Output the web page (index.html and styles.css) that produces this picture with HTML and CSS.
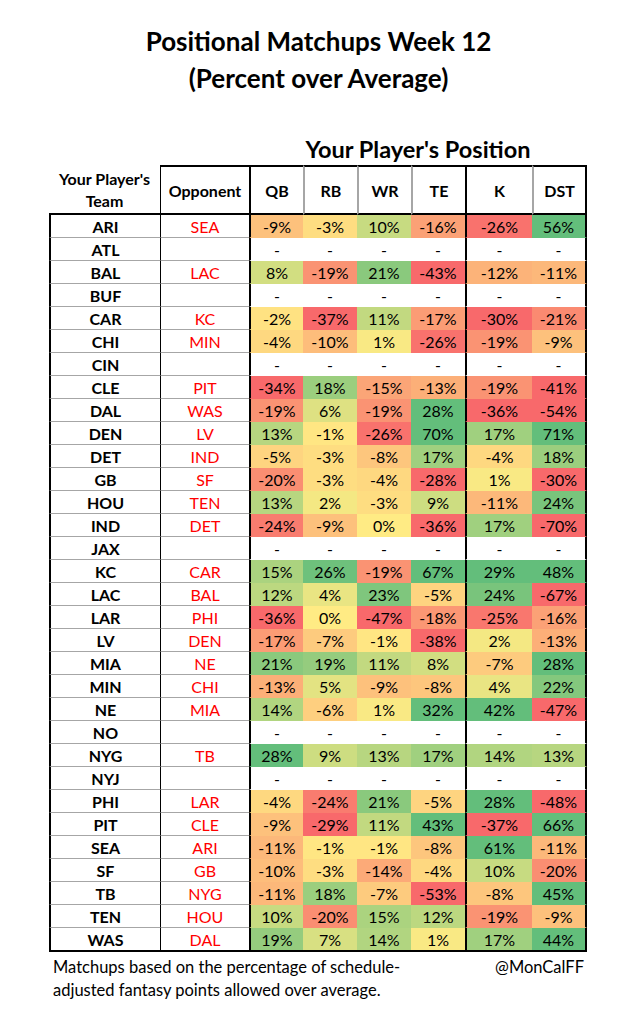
FILE: index.html
```html
<!DOCTYPE html>
<html lang="en">
<head>
<meta charset="utf-8">
<title>Positional Matchups Week 12</title>
<link rel="stylesheet" href="styles.css">
</head>
<body>
<h1 class="title">Positional Matchups Week 12<br>(Percent over Average)</h1>
<main class="sheet">
  <div class="caption">Your Player's Position</div>
  <table class="matchups">
    <colgroup>
      <col class="c-team"><col class="c-opp"><col class="c-pos"><col class="c-pos"><col class="c-pos"><col class="c-pos"><col class="c-k"><col class="c-dst">
    </colgroup>
    <thead>
      <tr>
        <th class="h-team">Your Player's<br>Team</th>
        <th class="h-opp">Opponent</th>
        <th class="h-pos h-qb">QB</th>
        <th class="h-pos">RB</th>
        <th class="h-pos">WR</th>
        <th class="h-pos">TE</th>
        <th class="h-pos h-k">K</th>
        <th class="h-pos h-dst">DST</th>
      </tr>
    </thead>
    <tbody>
      <tr><th>ARI</th><td class="opp">SEA</td><td>-9%</td><td>-3%</td><td>10%</td><td>-16%</td><td>-26%</td><td>56%</td></tr>
      <tr><th>ATL</th><td class="opp"></td><td>-</td><td>-</td><td>-</td><td>-</td><td>-</td><td>-</td></tr>
      <tr><th>BAL</th><td class="opp">LAC</td><td>8%</td><td>-19%</td><td>21%</td><td>-43%</td><td>-12%</td><td>-11%</td></tr>
      <tr><th>BUF</th><td class="opp"></td><td>-</td><td>-</td><td>-</td><td>-</td><td>-</td><td>-</td></tr>
      <tr><th>CAR</th><td class="opp">KC</td><td>-2%</td><td>-37%</td><td>11%</td><td>-17%</td><td>-30%</td><td>-21%</td></tr>
      <tr><th>CHI</th><td class="opp">MIN</td><td>-4%</td><td>-10%</td><td>1%</td><td>-26%</td><td>-19%</td><td>-9%</td></tr>
      <tr><th>CIN</th><td class="opp"></td><td>-</td><td>-</td><td>-</td><td>-</td><td>-</td><td>-</td></tr>
      <tr><th>CLE</th><td class="opp">PIT</td><td>-34%</td><td>18%</td><td>-15%</td><td>-13%</td><td>-19%</td><td>-41%</td></tr>
      <tr><th>DAL</th><td class="opp">WAS</td><td>-19%</td><td>6%</td><td>-19%</td><td>28%</td><td>-36%</td><td>-54%</td></tr>
      <tr><th>DEN</th><td class="opp">LV</td><td>13%</td><td>-1%</td><td>-26%</td><td>70%</td><td>17%</td><td>71%</td></tr>
      <tr><th>DET</th><td class="opp">IND</td><td>-5%</td><td>-3%</td><td>-8%</td><td>17%</td><td>-4%</td><td>18%</td></tr>
      <tr><th>GB</th><td class="opp">SF</td><td>-20%</td><td>-3%</td><td>-4%</td><td>-28%</td><td>1%</td><td>-30%</td></tr>
      <tr><th>HOU</th><td class="opp">TEN</td><td>13%</td><td>2%</td><td>-3%</td><td>9%</td><td>-11%</td><td>24%</td></tr>
      <tr><th>IND</th><td class="opp">DET</td><td>-24%</td><td>-9%</td><td>0%</td><td>-36%</td><td>17%</td><td>-70%</td></tr>
      <tr><th>JAX</th><td class="opp"></td><td>-</td><td>-</td><td>-</td><td>-</td><td>-</td><td>-</td></tr>
      <tr><th>KC</th><td class="opp">CAR</td><td>15%</td><td>26%</td><td>-19%</td><td>67%</td><td>29%</td><td>48%</td></tr>
      <tr><th>LAC</th><td class="opp">BAL</td><td>12%</td><td>4%</td><td>23%</td><td>-5%</td><td>24%</td><td>-67%</td></tr>
      <tr><th>LAR</th><td class="opp">PHI</td><td>-36%</td><td>0%</td><td>-47%</td><td>-18%</td><td>-25%</td><td>-16%</td></tr>
      <tr><th>LV</th><td class="opp">DEN</td><td>-17%</td><td>-7%</td><td>-1%</td><td>-38%</td><td>2%</td><td>-13%</td></tr>
      <tr><th>MIA</th><td class="opp">NE</td><td>21%</td><td>19%</td><td>11%</td><td>8%</td><td>-7%</td><td>28%</td></tr>
      <tr><th>MIN</th><td class="opp">CHI</td><td>-13%</td><td>5%</td><td>-9%</td><td>-8%</td><td>4%</td><td>22%</td></tr>
      <tr><th>NE</th><td class="opp">MIA</td><td>14%</td><td>-6%</td><td>1%</td><td>32%</td><td>42%</td><td>-47%</td></tr>
      <tr><th>NO</th><td class="opp"></td><td>-</td><td>-</td><td>-</td><td>-</td><td>-</td><td>-</td></tr>
      <tr><th>NYG</th><td class="opp">TB</td><td>28%</td><td>9%</td><td>13%</td><td>17%</td><td>14%</td><td>13%</td></tr>
      <tr><th>NYJ</th><td class="opp"></td><td>-</td><td>-</td><td>-</td><td>-</td><td>-</td><td>-</td></tr>
      <tr><th>PHI</th><td class="opp">LAR</td><td>-4%</td><td>-24%</td><td>21%</td><td>-5%</td><td>28%</td><td>-48%</td></tr>
      <tr><th>PIT</th><td class="opp">CLE</td><td>-9%</td><td>-29%</td><td>11%</td><td>43%</td><td>-37%</td><td>66%</td></tr>
      <tr><th>SEA</th><td class="opp">ARI</td><td>-11%</td><td>-1%</td><td>-1%</td><td>-8%</td><td>61%</td><td>-11%</td></tr>
      <tr><th>SF</th><td class="opp">GB</td><td>-10%</td><td>-3%</td><td>-14%</td><td>-4%</td><td>10%</td><td>-20%</td></tr>
      <tr><th>TB</th><td class="opp">NYG</td><td>-11%</td><td>18%</td><td>-7%</td><td>-53%</td><td>-8%</td><td>45%</td></tr>
      <tr><th>TEN</th><td class="opp">HOU</td><td>10%</td><td>-20%</td><td>15%</td><td>12%</td><td>-19%</td><td>-9%</td></tr>
      <tr><th>WAS</th><td class="opp">DAL</td><td>19%</td><td>7%</td><td>14%</td><td>1%</td><td>17%</td><td>44%</td></tr>
    </tbody>
  </table>
  <footer class="note">
    <p class="note-text">Matchups based on the percentage of schedule-<br>adjusted fantasy points allowed over average.</p>
    <p class="note-handle">@MonCalFF</p>
  </footer>
</main>
<script src="script.js"></script>
</body>
</html>
```

FILE: styles.css
```css
* { box-sizing: border-box; }

html, body {
  margin: 0;
  padding: 0;
  background: #ffffff;
}

body {
  font-family: Lato, "Liberation Sans", sans-serif;
  color: #000000;
}

.title {
  margin: 23px 0 0;
  text-align: center;
  font-size: 26px;
  line-height: 36.5px;
  font-weight: 700;
}

.sheet {
  width: 538px;
  margin-left: 49px;
}

.caption {
  margin-top: 39.5px;
  height: 26px;
  padding-left: 200px;
  text-align: center;
  font-size: 23.5px;
  line-height: 26px;
  font-weight: 700;
  white-space: nowrap;
}

.matchups {
  margin-top: 3.5px;
  width: 538px;
  table-layout: fixed;
  border-collapse: separate;
  border-spacing: 0;
}

.c-team { width: 111px; }
.c-opp { width: 89px; }
.c-pos { width: 54px; }
.c-k { width: 67px; }
.c-dst { width: 55px; }

.matchups th,
.matchups td {
  padding: 0;
  text-align: center;
  vertical-align: middle;
  font-size: 16px;
  line-height: 17px;
  white-space: nowrap;
}

.matchups thead tr { height: 50px; }

.matchups thead th {
  font-weight: 700;
  border-bottom: 2px solid #000;
}

.matchups thead th.h-team {
  line-height: 22px;
  padding-top: 1px;
}

.h-opp {
  border-top: 2px solid #000;
  border-left: 1px solid #000;
}

.h-pos {
  border-top: 2px solid #000;
  border-left: 2px solid #a6a6a6;
}

.matchups thead th.h-qb,
.matchups thead th.h-k { border-left-color: #000; }

.h-dst { border-right: 2px solid #000; }

.matchups tbody tr { height: 23px; }
.matchups tbody tr:last-child { height: 24px; }

.matchups tbody th,
.matchups tbody td {
  padding-top: 1px;
  border-bottom: 1px solid transparent;
}

.matchups tbody th {
  font-weight: 700;
  border-left: 2px solid #000;
  border-bottom-color: #a6a6a6;
}

.matchups tbody td.opp {
  color: #ff0000;
  border-left: 1px solid #000;
  border-bottom-color: #a6a6a6;
}

.matchups tbody td:nth-child(3),
.matchups tbody td:nth-child(7) {
  border-left: 2px solid #000;
}

.matchups tbody td:nth-child(8) {
  border-right: 2px solid #000;
}

.matchups tbody tr:last-child th,
.matchups tbody tr:last-child td {
  border-bottom: 2px solid #000;
}

.note {
  display: flex;
  justify-content: space-between;
  align-items: flex-start;
  margin-top: 4px;
  padding: 0 3px 0 4px;
  font-size: 16.5px;
  line-height: 22.5px;
}

.note p { margin: 0; }
```

FILE: script.js
```js
(function () {
  var red = [248, 105, 107];
  var yellow = [255, 235, 132];
  var green = [99, 190, 123];
  var limit = 28;
  var cells = document.querySelectorAll('.matchups tbody td:nth-child(n+3)');
  cells.forEach(function (td) {
    var v = parseFloat(td.textContent);
    if (isNaN(v)) return;
    var from, to, t;
    if (v <= 0) {
      from = red; to = yellow;
      t = Math.max(0, (v + limit) / limit);
    } else {
      from = yellow; to = green;
      t = Math.min(1, v / limit);
    }
    var c = from.map(function (x, i) { return Math.round(x + (to[i] - x) * t); });
    td.style.backgroundColor = 'rgb(' + c.join(',') + ')';
  });
})();
```
